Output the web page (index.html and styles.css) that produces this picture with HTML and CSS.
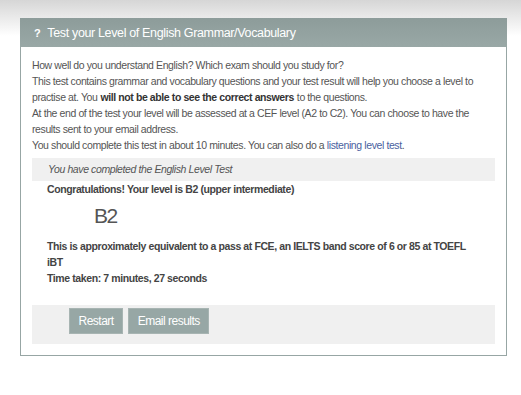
FILE: index.html
```html
<!DOCTYPE html>
<html lang="en">
<head>
    <meta charset="UTF-8">
    <title>English Level Test</title>
    <link rel="stylesheet" href="styles.css">
</head>
<body>
<section class="panel">
    <header class="panel-head">
        <span class="qmark">?</span>
        <h1>Test your Level of English Grammar/Vocabulary</h1>
    </header>
    <div class="panel-body">
        <div class="intro">
            <p>How well do you understand English? Which exam should you study for?</p>
            <p>This test contains grammar and vocabulary questions and your test result will help you choose a level to practise at. You<b>will not be able to see the correct answers</b>to the questions.</p>
            <p>At the end of the test your level will be assessed at a CEF level (A2 to C2). You can choose to have the results sent to your email address.</p>
            <p>You should complete this test in about 10 minutes. You can also do a <a href="#">listening level test</a>.</p>
        </div>

        <div class="done">You have completed the English Level Test</div>
        <div class="result">
            <p class="congrats">Congratulations! Your level is B2 (upper intermediate)</p>
            <div class="level">B2</div>
            <p>This is approximately equivalent to a pass at FCE, an IELTS band score of 6 or 85 at TOEFL iBT</p>
            <p>Time taken: 7 minutes, 27 seconds</p>
        </div>

        <div class="actions">
            <button class="btn">Restart</button>
            <button class="btn">Email results</button>
        </div>
    </div>
</section>
</body>
</html>
```

FILE: styles.css
```css
*{
    margin: 0;
    padding: 0;
    box-sizing: border-box;
}
body{
    font-family: "Liberation Sans", Arial, sans-serif;
    font-size: 10.5px;
    letter-spacing: -0.4px;
    color: #555555;
    background: #ffffff linear-gradient(#d6d6d6, #ffffff 36px) no-repeat;
    min-height: 395px;
    padding-top: 18px;
}

.panel{
    width: 487px;
    margin-left: 20px;
    border: 1px solid #97a6a4;
    border-top: none;
    background: #ffffff;
}
.panel-head{
    display: flex;
    align-items: center;
    height: 29px;
    margin: 0 -1px;
    padding-left: 14px;
    background: linear-gradient(#8d9c9a, #99a8a6);
    color: #ffffff;
}
.qmark{
    font-weight: bold;
    font-size: 11px;
    margin-right: 7px;
}
.panel-head h1{
    font-size: 12.5px;
    letter-spacing: -0.35px;
    font-weight: normal;
}

.panel-body{
    padding: 10px 11px 11px;
}
.intro p{
    line-height: 16px;
}
.intro b{
    color: #333333;
    margin: 0 3px;
}
.intro a{
    color: #4a5fa0;
    text-decoration: none;
}

.done{
    margin-top: 5px;
    height: 23px;
    line-height: 23px;
    padding-left: 16px;
    background: #f0f0f0;
    font-style: italic;
}
.result{
    padding: 0 24px 0 15px;
    font-weight: bold;
    color: #444444;
}
.result p{
    line-height: 16px;
}
.congrats{
    margin-bottom: 7px;
}
.level{
    font-size: 21px;
    letter-spacing: -1.5px;
    font-weight: normal;
    line-height: 24px;
    color: #555555;
    padding-left: 47px;
    margin-bottom: 10px;
}

.actions{
    margin-top: 19px;
    padding: 3px 0 10px 37px;
    background: #f0f0f0;
    display: flex;
    gap: 5px;
}
.btn{
    height: 26px;
    padding: 0 8.5px;
    border: 1px solid #a7b4b2;
    background: #97a7a5;
    color: #ffffff;
    font-family: "Liberation Sans", Arial, sans-serif;
    font-size: 12px;
    letter-spacing: -0.5px;
}
```
